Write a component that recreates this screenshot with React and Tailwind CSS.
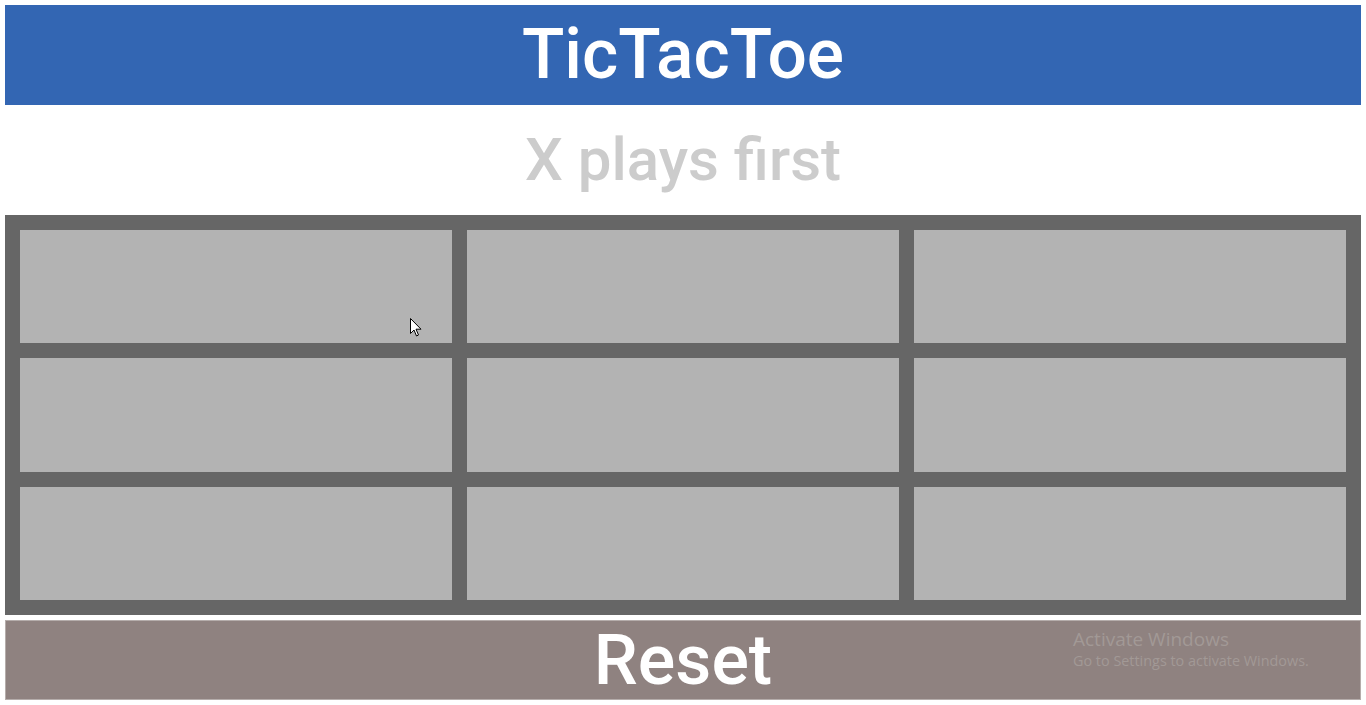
import { useState } from 'react';

function App() {
    const [cells, setCells] = useState(Array(9).fill(''));

    return (
        <div className="relative p-[5px] bg-white" style={{ fontFamily: 'Roboto, "Liberation Sans", sans-serif' }}>
            {/* Header */}
            <div className="h-[100px] bg-[#3366b3] flex items-center justify-center">
                <h1 className="text-white text-[69.5px] font-medium leading-none">TicTacToe</h1>
            </div>

            {/* Estado */}
            <div className="h-[110px] flex items-center justify-center">
                <p className="text-[#cccccc] text-[60px] font-medium leading-none">X plays first</p>
            </div>

            {/* Tablero */}
            <div className="h-[400px] bg-[#666666] p-[15px] grid grid-cols-3 grid-rows-3 gap-[15px]">
                {cells.map((c, i) => (
                    <div
                        key={i}
                        className="bg-[#b3b3b3] relative"
                        onClick={() => {
                            const next = [...cells];
                            next[i] = 'X';
                            setCells(next);
                        }}
                    >
                        {c}
                        {i === 0 && (
                            <svg className="absolute left-[390px] top-[88px]" width="12" height="19" viewBox="0 0 12 19">
                                <path d="M0.5 0.5 L0.5 15.5 L4 12 L6.5 18 L8.5 17 L6 11.2 L11 11.2 Z" fill="#ffffff" stroke="#000000" strokeWidth="1" />
                            </svg>
                        )}
                    </div>
                ))}
            </div>

            {/* Reset */}
            <button
                className="mt-[5px] w-full h-[80px] bg-[#8f8280] border border-[#b5adab] flex items-center justify-center"
                onClick={() => setCells(Array(9).fill(''))}
            >
                <span className="text-white text-[70px] font-medium leading-none">Reset</span>
            </button>

            {/* Marca de agua de Windows */}
            <div
                className="absolute left-[1073px] top-[628px] text-[#a29996] pointer-events-none"
                style={{ fontFamily: '"Open Sans", "Noto Sans", sans-serif' }}
            >
                <div className="text-[19px] leading-[23px]">Activate Windows</div>
                <div className="text-[14.4px] leading-[20px]">Go to Settings to activate Windows.</div>
            </div>
        </div>
    );
}

export default App;
